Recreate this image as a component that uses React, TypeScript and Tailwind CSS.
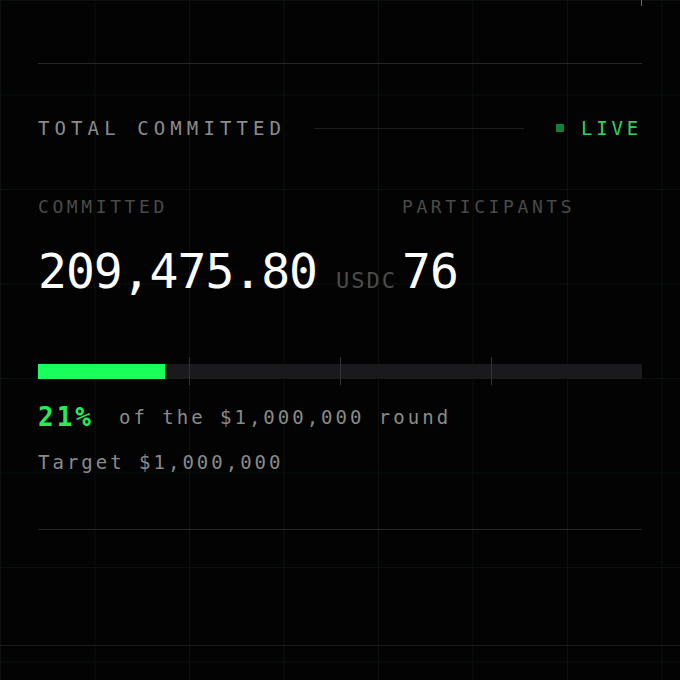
import { Fragment } from 'react'

const MONO = "font-['DejaVu_Sans_Mono','Liberation_Mono',monospace]"

const TICKS = [25, 50, 75]

export default function App() {
  const committed = 209475.8
  const target = 1000000
  const pct = Math.round((committed / target) * 100)

  return (
    <div
      className={`min-h-[680px] w-full bg-[#030303] [background-image:linear-gradient(to_right,#0a110b_1px,transparent_1px),linear-gradient(to_bottom,#0a110b_1px,transparent_1px)] [background-size:94.5px_94.5px] ${MONO}`}
    >
      <div className="px-[38px]">
        <div className="h-[63px] flex justify-end">
          <div className="w-px h-[6px] bg-[#6a6a6a]" />
        </div>
        <div className="h-px bg-[#262826]" />

        {/* header */}
        <div className="mt-[52px] h-[24px] flex items-center">
          <span className="text-[19px] tracking-[5.1px] text-[#8c8c8c] whitespace-nowrap">TOTAL COMMITTED</span>
          <div className="ml-[28px] flex-1 h-px bg-[#1c1e1c]" />
          <div className="ml-[32px] flex items-center gap-[17px]">
            <span className="w-[8px] h-[8px] bg-[#13803a]" />
            <span className="text-[19px] tracking-[0.2em] text-[#2fd45c]">LIVE</span>
          </div>
        </div>

        {/* stats */}
        <div className="mt-[56px] flex">
          <div className="w-[364px] shrink-0">
            <div className="h-[20px] flex items-center text-[18px] tracking-[0.2em] text-[#4a4a4a]">COMMITTED</div>
            <div className="mt-[31px] flex items-baseline whitespace-nowrap">
              <span className="text-[48px] leading-[48px] tracking-[-1px] text-white">209,475.80</span>
              <span className="ml-[19px] text-[22px] tracking-[2px] text-[#4c4c4c]">USDC</span>
            </div>
          </div>
          <div>
            <div className="h-[20px] flex items-center text-[18px] tracking-[0.2em] text-[#4a4a4a]">PARTICIPANTS</div>
            <div className="mt-[31px] text-[48px] leading-[48px] tracking-[-1px] text-white">76</div>
          </div>
        </div>

        {/* progress */}
        <div className="mt-[60px] relative h-[28px] pt-[7px]">
          <div className="h-[15px] bg-[#1a1a1c]">
            <div className="h-full bg-[#19ff5c]" style={{ width: `${(committed / target) * 100}%` }} />
          </div>
          {TICKS.map(t => (
            <Fragment key={t}>
              <div className="absolute top-0 bottom-0 w-px bg-[#333335]" style={{ left: `${t}%` }} />
            </Fragment>
          ))}
        </div>

        <div className="mt-[20px] h-[24px] flex items-center whitespace-nowrap">
          <span className="text-[26px] font-bold tracking-[3px] text-[#22ee5a]">{pct}%</span>
          <span className="ml-[25px] text-[19px] tracking-[3px] text-[#8a8a8a]">of the $1,000,000 round</span>
        </div>
        <div className="mt-[21px] h-[24px] flex items-center text-[19px] tracking-[3px] text-[#8a8a8a]">
          Target $1,000,000
        </div>

        <div className="mt-[55px] h-px bg-[#262826]" />
      </div>

      <div className="mt-[115px] h-px bg-[#1b1c1b]" />
    </div>
  )
}
